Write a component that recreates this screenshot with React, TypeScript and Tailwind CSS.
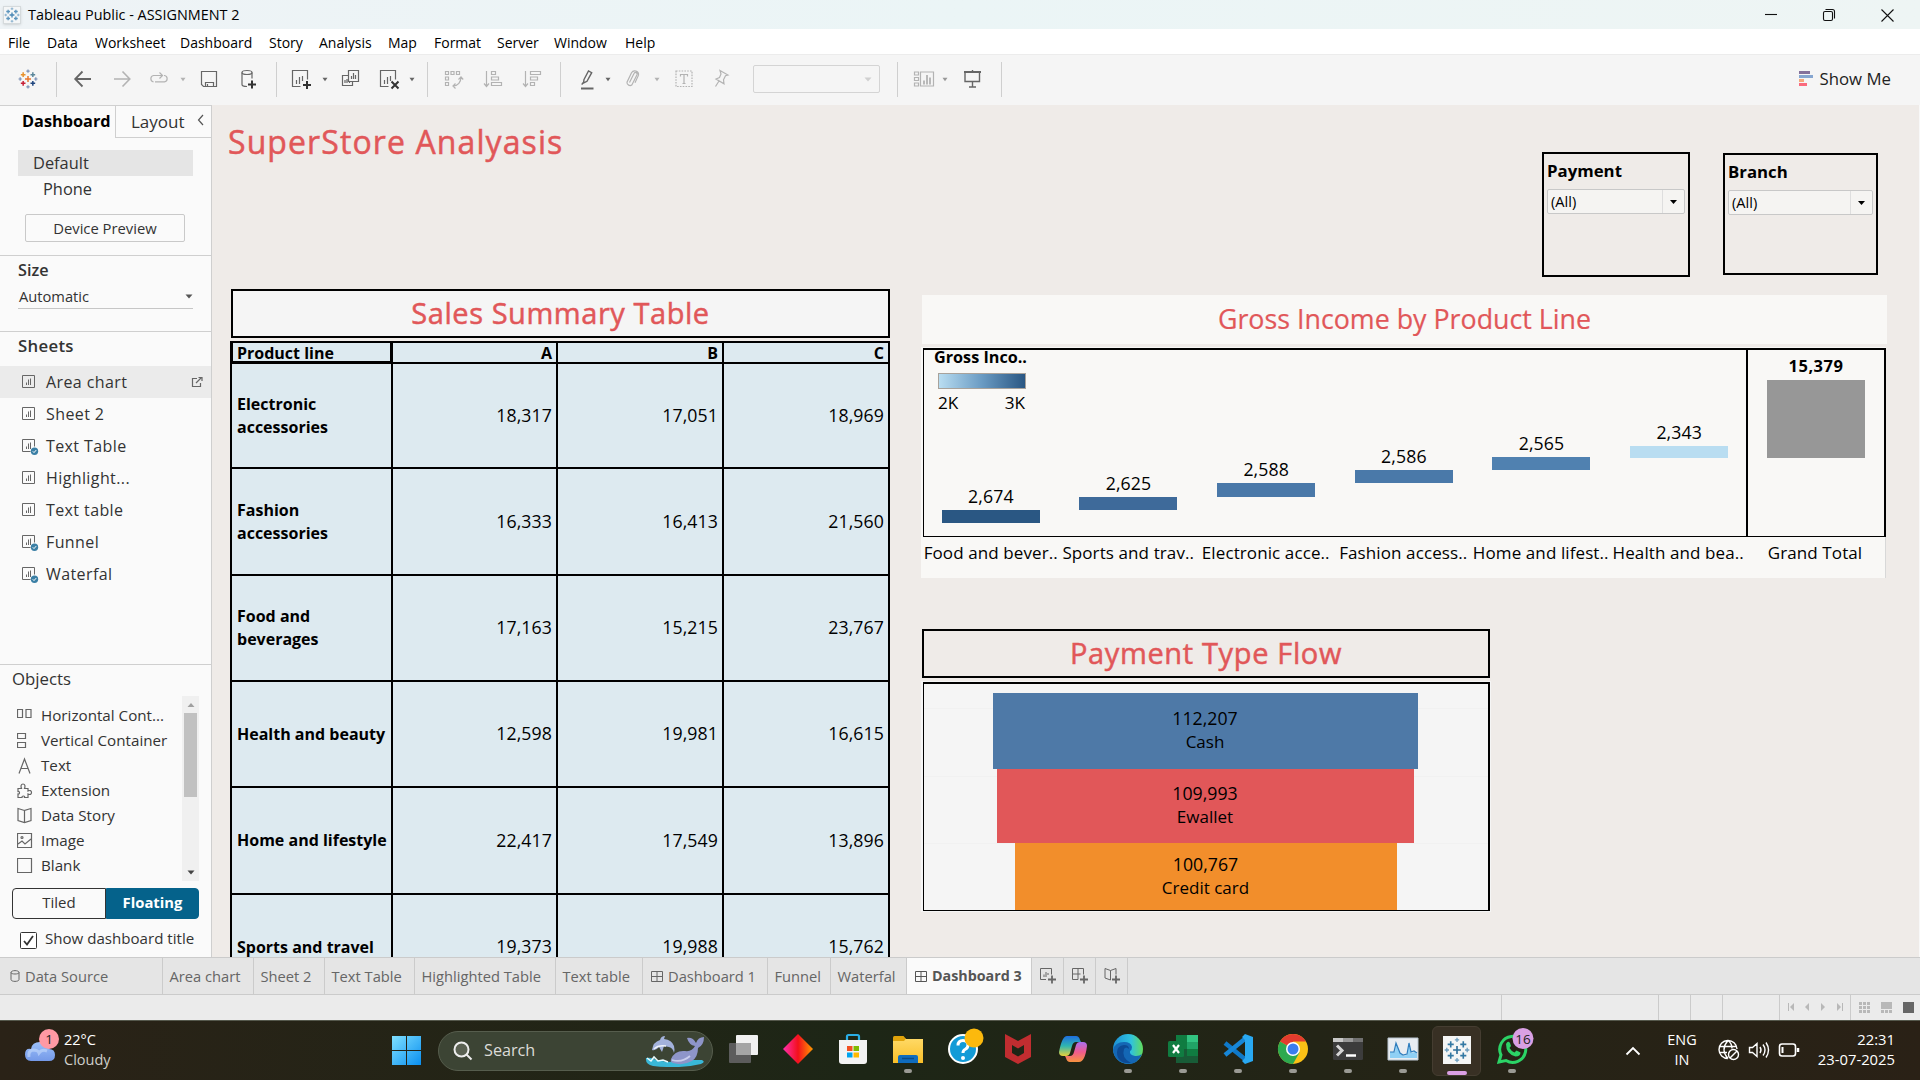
import React from "react";

type Kids = { children?: React.ReactNode };

const plus = (x: number, y: number, r: number) => `M${x - r} ${y}h${2 * r}M${x} ${y - r}v${2 * r}`;

function TableauMark({ size, colors, w = 1.4 }: { size: number; colors: string[]; w?: number }) {
  const [c, a, b, d, e, f] = colors;
  return (
    <svg width={size} height={size} viewBox="0 0 24 24" fill="none" strokeWidth={w} className="shrink-0">
      <path d={plus(12, 12, 3.6)} stroke={c} />
      <path d={plus(6.2, 6.8, 2.8)} stroke={a} />
      <path d={plus(17.8, 6.8, 2.8)} stroke={b} />
      <path d={plus(6.2, 17.2, 2.8)} stroke={d} />
      <path d={plus(17.8, 17.2, 2.8)} stroke={e} />
      <path d={plus(12, 2.6, 2) + plus(12, 21.4, 2) + plus(2.6, 12, 2) + plus(21.4, 12, 2)} stroke={f} strokeWidth={w * 0.8} />
    </svg>
  );
}

function TIcon({ children, className = "" }: Kids & { className?: string }) {
  return (
    <svg width="24" height="24" viewBox="0 0 24 24" fill="none" stroke="currentColor" strokeWidth="1.2" className={"shrink-0 " + className}>
      {children}
    </svg>
  );
}

function Caret({ className = "" }: { className?: string }) {
  return (
    <svg width="8" height="5" viewBox="0 0 8 5" className={"shrink-0 " + className}>
      <path d="M1.5 .8h5L4 4.3z" fill="currentColor" />
    </svg>
  );
}

function Div({ className = "" }: { className?: string }) {
  return <div className={"h-[35px] w-px shrink-0 bg-[#cfcfcf] " + className} />;
}

function TitleBar() {
  return (
    <div className="flex h-[29px] items-center bg-linear-to-r from-[#eef3f6] via-[#ebf5f6] to-[#eef5f4]">
      <div className="ml-[3px] flex h-[18px] w-[18px] items-center justify-center border border-[#d5dadc] bg-[#f4f6f7] shadow-sm">
        <TableauMark size={16} w={2} colors={["#4a86b4", "#5b94bd", "#5b94bd", "#5b94bd", "#5b94bd", "#8ab2cf"]} />
      </div>
      <span className="ml-[7px] flex-1 text-[14.400px] text-black">Tableau Public - ASSIGNMENT 2</span>
      <svg width="140" height="16" viewBox="0 0 140 16" fill="none" stroke="#111" strokeWidth="1.1" className="mr-[17px]">
        <path d="M2 7.5h12" />
        <rect x="60.5" y="4.5" width="9" height="9" rx="1.5" />
        <path d="M62.5 2.5h7a2 2 0 0 1 2 2v7" />
        <path d="M118.5 2.5l12 12M130.500 2.500l-12 12" />
      </svg>
    </div>
  );
}

const menus: [string, string][] = [
  ["File", "w-[39px]"],
  ["Data", "w-[48px]"],
  ["Worksheet", "w-[85px]"],
  ["Dashboard", "w-[89px]"],
  ["Story", "w-[50px]"],
  ["Analysis", "w-[69px]"],
  ["Map", "w-[46px]"],
  ["Format", "w-[63px]"],
  ["Server", "w-[57px]"],
  ["Window", "w-[71px]"],
  ["Help", "w-[60px]"],
];

function MenuBar() {
  return (
    <div className="flex h-[25px] items-center bg-white pt-[2px] pl-[8px] text-[14px] text-black">
      {menus.map(([m, w]) => (
        <span key={m} className={"shrink-0 " + w}>{m}</span>
      ))}
    </div>
  );
}

function Toolbar() {
  return (
    <div className="flex h-[51px] items-center border-t border-[#ececec] bg-[#f5f5f5] pb-[2px] pl-[16px] text-[#666]">
      <div className="flex w-[24px] justify-center">
        <TableauMark size={20} colors={["#e8762d", "#e8912d", "#5b879b", "#c72037", "#1f457e", "#7a8fb5"]} w={1.8} />
      </div>
      <Div className="ml-[16px]" />
      <TIcon className="ml-[14px]"><path d="M20 12H4.500M11.500 4.500L4.200 12l7.300 7.500" strokeWidth="1.8" /></TIcon>
      <TIcon className="ml-[15px] text-[#b3b3b3]"><path d="M4 12h15.500M12.500 4.500l7.300 7.500-7.300 7.500" strokeWidth="1.6" /></TIcon>
      <TIcon className="ml-[13px] text-[#b3b3b3]"><path d="M6.500 14.800a3.200 3.200 0 0 1 0-6.300H15.500M12.500 5.500l3 3-3 3M17 8.500h.500a3.200 3.200 0 0 1 0 6.300H8" /></TIcon>
      <Caret className="ml-[8px] text-[#b3b3b3]" />
      <TIcon className="ml-[10px]"><path d="M4.500 4.500h15v15h-13l-2-2zM8.500 19.500v-4h8v4M10.500 19.500v-2.500" /></TIcon>
      <TIcon className="ml-[15px]">
        <ellipse cx="11" cy="5.500" rx="5" ry="2" />
        <path d="M6 5.500v12c0 1.200 2 2 5 2M16 5.500v6" />
        <path d="M12 17.500h8M16 13.500v8" strokeWidth="2" stroke="#333" />
      </TIcon>
      <Div className="ml-[16px]" />
      <TIcon className="ml-[12px]">
        <path d="M11.500 19.500h-8v-16h15v9M7.500 17v-4M10.500 17v-7M13.500 14v-5" />
        <path d="M14 18h8M18 14v8" strokeWidth="2" stroke="#333" />
      </TIcon>
      <Caret className="ml-[8px]" />
      <TIcon className="ml-[10px]">
        <path d="M9.500 3.500h10v11h-10zM12.500 12V9M14.500 12V6M16.500 12V8M9 8.500H3.500v10h10v-4M6 16v-3M8 16v-4M10.500 16v-1" />
      </TIcon>
      <TIcon className="ml-[14px]">
        <path d="M11.500 19.500h-8v-16h15v9M7.500 17v-4M10.500 17v-7M13.500 14v-5" />
        <path d="M14.500 14.500l7 7M21.500 14.500l-7 7" strokeWidth="2" stroke="#333" />
      </TIcon>
      <Caret className="ml-[7px]" />
      <Div className="ml-[11px]" />
      <TIcon className="ml-[13px] text-[#b3b3b3]">
        <path d="M4.500 4.500h3v3h-3zM10 4.500h3v3h-3zM15.500 4.500h3v3h-3zM4.500 10h3v3h-3zM4.500 15.500h3v3h-3zM20 10c0 5-3 9-8 9M17.500 12.500L20 10l2.200 2.500M14.500 16.500L12 19l2.500 2.500" />
      </TIcon>
      <TIcon className="ml-[16px] text-[#b3b3b3]">
        <path d="M5.500 4v15M3 16.500L5.500 19.500l2.500-3M10.500 4.500h4v3h-4zM10.500 10h7v3h-7zM10.500 15.500h10v3h-10z" />
      </TIcon>
      <TIcon className="ml-[15px] text-[#b3b3b3]">
        <path d="M5.500 4v15M3 16.500L5.500 19.500l2.500-3M10.500 4.500h10v3h-10zM10.500 10h7v3h-7zM10.500 15.500h4v3h-4z" />
      </TIcon>
      <Div className="ml-[16px]" />
      <TIcon className="ml-[14px]">
        <path d="M9 12.500L13.500 4l3.200 1.700-4.700 8.600-3.500 1.700zM8 15.500l-1.200 2.200" strokeWidth="1.400" />
        <path d="M6 21.500h12.500" strokeWidth="2" />
      </TIcon>
      <Caret className="ml-[5px]" />
      <TIcon className="ml-[9px] text-[#b3b3b3]">
        <path d="M8.500 15.500l4.500-9a1.500 1.500 0 0 1 3 1.200l-5 10a3 3 0 0 1-5-2.500l4.500-9.500a3.800 3.800 0 0 1 7 2.500l-3.500 7.500" />
      </TIcon>
      <Caret className="ml-[8px] text-[#b3b3b3]" />
      <TIcon className="ml-[11px] text-[#b3b3b3]">
        <rect x="4" y="4" width="16" height="15.500" strokeDasharray="1.600 1.200" />
        <path d="M8.500 9.500V7.500h7v2M12 7.500v9M10.500 16.500h3" />
      </TIcon>
      <TIcon className="ml-[13px] text-[#b3b3b3]">
        <path d="M11 3.500l8 4.500-2.500.800-2 4 .5 4-8-4.800 3.500-1.500 1.500-3.500zM10 14l-3.500 5.500" />
      </TIcon>
      <div className="ml-[20px] flex h-[28px] w-[127px] items-center justify-end rounded-xs border border-[#d4d4d4] pr-[7px] text-[#d0d0d0]">
        <svg width="8" height="5"><path d="M.500.500h7L4 4.500z" fill="currentColor" /></svg>
      </div>
      <Div className="ml-[17px]" />
      <TIcon className="ml-[14px] text-[#b3b3b3]">
        <path d="M2.500 5h4v3h-4zM2.500 10.500h4v3h-4zM2.500 16h4v3h-4zM8.500 5h13v14h-13z" />
        <path d="M12 17.500v-4M15 17.500V8M18 17.500v-7" strokeWidth="1.800" />
      </TIcon>
      <Caret className="ml-[5px] text-[#999]" />
      <TIcon className="ml-[11px]">
        <path d="M4 5h17" strokeWidth="2" />
        <path d="M5 5v9.500h14.500V5M12.500 14.500v5M9 20h7M12.500 3v2" strokeWidth="1.400" />
      </TIcon>
      <Div className="ml-[17px]" />
      <div className="ml-auto flex items-center pr-[29px]">
        <svg width="15" height="16">
          <path d="M0 0h11v3H0z" fill="#84719b" /><path d="M0 4h14v3H0z" fill="#86a6d0" />
          <path d="M0 8h5v3H0z" fill="#f4a97c" /><path d="M0 12h8v3H0z" fill="#fa6a7d" />
        </svg>
        <span className="ml-[6px] text-[16.800px] text-[#222]">Show Me</span>
      </div>
    </div>
  );
}

function SheetIcon({ used }: { used?: boolean }) {
  return (
    <svg width="18" height="18" viewBox="0 0 18 18" fill="none" stroke="#666" strokeWidth="1">
      <path d={used ? "M8.500 14.500h-8v-12h12v7" : "M.5 2.500h12v12H.5z"} />
      <path d="M4.500 12V9.500M6.500 12V6.500M8.500 12V5.500" />
      {used && <circle cx="12.500" cy="14.300" r="3.700" fill="#3a7fa5" stroke="none" />}
      {used && <path d="M10.800 14.300l1.200 1.300 2.200-2.500" stroke="#fff" />}
    </svg>
  );
}

const sheets: [string, boolean][] = [
  ["Area chart", false], ["Sheet 2", false], ["Text Table", true], ["Highlight...", false],
  ["Text table", false], ["Funnel", true], ["Waterfal", true],
];

const objects: [string, React.ReactNode][] = [
  ["Horizontal Cont...", <path key="h" d="M.5 2.500h5v8h-5zM9 2.500h5v8H9z" />],
  ["Vertical Container", <path key="v" d="M.5 1.500h8v5h-8zM.5 10.500h8v5h-8z" />],
  ["Text", <path key="t" d="M2 16.500L7.500 2 13 16.500M4 11.500h7" />],
  ["Extension", <path key="e" d="M1 6.500h3.500C3.500 4 4 2 6 2s2.500 2 1.500 4.500H11V9c2-1 3.500-.5 3.500 1.500S13 13 11 12v3.500H7.500c1-2-3-2-2.500 0H1V12c2 .5 2-3 0-2.500z" />],
  ["Data Story", <path key="d" d="M7.500 3.500L1 1.500v12l6.500 2 6.500-2v-12L7.500 3.500v12" />],
  ["Image", <g key="i"><path d="M.5 1.500h14v14H.5zM1 12l4-3 3 3 6-5" /><circle cx="5" cy="5.500" r="1" /></g>],
  ["Blank", <path key="b" d="M.5 1.500h14v14H.5z" />],
];

function Sidebar() {
  return (
    <aside className="flex h-full w-[212px] shrink-0 flex-col border-r border-[#cfcfcf] bg-[#fafafa] text-[#333]">
      <div className="flex h-[33px] border-t border-[#d0d0d0]">
        <div className="w-[115px] pt-[3px] pl-[22px] text-[16.300px] leading-[24px] font-bold text-black">Dashboard</div>
        <div className="flex flex-1 items-center border-b border-l border-[#cfcfcf] pl-[15px] text-[17px]">
          Layout
          <svg width="8" height="12" className="mb-[4px] ml-[12px]" fill="none" stroke="#555" strokeWidth="1.200"><path d="M6 1L1.500 6 6 11" /></svg>
        </div>
      </div>
      <div className="h-[117px] pt-[12px] text-[16.400px] leading-[26px]">
        <div className="ml-[18px] w-[175px] bg-[#e5e5e5] pl-[15px]">Default</div>
        <div className="pl-[43px]">Phone</div>
        <div className="mt-[12px] ml-[25px] flex h-[28px] w-[160px] items-center justify-center rounded-xs border border-[#c9c9c9] text-[14.800px]">Device Preview</div>
      </div>
      <div className="h-[76px] border-t border-[#cfcfcf]">
        <div className="mt-[2px] pl-[18px] text-[16.200px] leading-[24px] font-semibold">Size</div>
        <div className="ml-[18px] flex h-[27px] w-[175px] items-center justify-between border-b border-[#c6c6c6] pt-[2px] text-[14.700px]">
          <span className="pl-px">Automatic</span>
          <svg width="8" height="5"><path d="M.5.500h7L4 4.500z" fill="#555" /></svg>
        </div>
      </div>
      <div className="h-[333px] border-t border-[#cfcfcf]">
        <div className="h-[34px] pt-[2px] pl-[18px] text-[16.800px] leading-[24px] font-semibold tracking-[0.3px]">Sheets</div>
        {sheets.map(([name, used], i) => (
          <div key={name} className={"flex h-[32px] items-center pl-[22px] text-[16px] tracking-[0.4px] " + (i === 0 ? "bg-[#ebebeb]" : "")}>
            <SheetIcon used={used} />
            <span className="ml-[6px] flex-1">{name}</span>
            {i === 0 && (
              <svg width="12" height="12" className="mr-[8px]" fill="none" stroke="#666" strokeWidth="1.200">
                <path d="M6 2.500H1.500v8h8V7M5 7l5-5M7.500 1.500h3.500V5" />
              </svg>
            )}
          </div>
        ))}
      </div>
      <div className="flex-1 border-t border-[#cfcfcf]">
        <div className="h-[31px] pt-px pl-[12px] text-[16.800px] leading-[25px]">Objects</div>
        <div className="flex h-[185px]">
          <div className="w-[182px] overflow-hidden pt-[7px]">
            {objects.map(([name, d]) => (
              <div key={name} className="flex h-[25px] items-center pl-[17px] text-[15.200px]">
                <svg width="16" height="17" fill="none" stroke="#666" strokeWidth="1.200" className="shrink-0">{d}</svg>
                <span className="ml-[8px] whitespace-nowrap">{name}</span>
              </div>
            ))}
          </div>
          <div className="flex w-[17px] flex-col items-center justify-between bg-[#f0f0f0] pb-[6px]">
            <div className="flex flex-col items-center">
              <svg width="8" height="17"><path d="M.5 11h7L4 7z" fill="#a0a0a0" /></svg>
              <div className="h-[84px] w-[13px] bg-[#c1c1c1]" />
            </div>
            <svg width="8" height="5"><path d="M.5.500h7L4 4.500z" fill="#444" /></svg>
          </div>
        </div>
        <div className="mt-[7px] ml-[12px] flex h-[31px] w-[187px] text-[15px] leading-[27px]">
          <div className="w-[94px] rounded-l-sm border border-[#333] bg-[#fafafa] text-center text-[#333]">Tiled</div>
          <div className="flex-1 rounded-r-sm border border-[#05628b] bg-[#05628b] text-center text-[14.800px] font-bold text-white">Floating</div>
        </div>
        <div className="mt-[11px] flex items-center pl-[20px] text-[15.100px] leading-[17px]">
          <svg width="17" height="17" fill="none"><rect x=".5" y=".5" width="16" height="16" rx="1" fill="#fff" stroke="#333" /><path d="M4 9l3 3.500L13 4" stroke="#333" strokeWidth="1.800" /></svg>
          <span className="mb-[3px] ml-[8px]">Show dashboard title</span>
        </div>
      </div>
    </aside>
  );
}

const rows: [string, string, string, string, string][] = [
  ["Electronic accessories", "18,317", "17,051", "18,969", "h-[105px]"],
  ["Fashion accessories", "16,333", "16,413", "21,560", "h-[107px]"],
  ["Food and beverages", "17,163", "15,215", "23,767", "h-[106px]"],
  ["Health and beauty", "12,598", "19,981", "16,615", "h-[106px]"],
  ["Home and lifestyle", "22,417", "17,549", "13,896", "h-[107px]"],
  ["Sports and travel", "19,373", "19,988", "15,762", "h-[106px]"],
];

const cell = "border-r-2 border-b-2 border-black flex items-center";

function SalesTable() {
  return (
    <section className="flex flex-col">
      <h2 className="ml-px h-[49px] w-[659px] border-2 border-black bg-[#f5f5f5] text-center text-[29px] leading-[44px] tracking-[0.55px] text-[#e15759] [-webkit-text-stroke:0.5px_#e15759]">Sales Summary Table</h2>
      <div className="mt-[3px] w-[660px] border-t-2 border-l-2 border-black bg-[#ddeaf0] text-[17.700px] leading-[17px] text-black">
        <div className="grid h-[21px] grid-cols-[161px_165px_166px_166px] text-[16px] font-bold">
          <div className={cell + " pt-px pl-[5px] shadow-[inset_1px_0_0_#000,inset_-1px_-1px_0_#000]"}>Product line</div>
          {["A", "B", "C"].map((b) => <div key={b} className={cell + " justify-end pt-px pr-[4px]"}>{b}</div>)}
        </div>
        {rows.map(([name, a, b, c, h]) => (
          <div key={name} className={"grid grid-cols-[161px_165px_166px_166px] " + h}>
            <div className={cell + " pl-[5px] text-[16px] leading-[23px] font-bold"}>
              <span className={name.includes("accessories") || name.includes("beverages") ? "w-[110px]" : "whitespace-nowrap"}>{name}</span>
            </div>
            {[a, b, c].map((v) => <div key={v} className={cell + " justify-end pr-[4px] pb-px tracking-[0.1px]"}>{v}</div>)}
          </div>
        ))}
      </div>
    </section>
  );
}

function Filter({ name, box, first }: { name: string; box: string; first: string }) {
  return (
    <div className={"border-2 border-black px-[3px] pt-[5px] " + box}>
      <div className="text-[16.800px] leading-[24px] font-bold text-black">{name}</div>
      <div className="mt-[6px] flex h-[25px] rounded-xs border border-[#c8c8c8] bg-[#f5f4f2] text-[14.600px] leading-[23px] text-black">
        <span className={"border-r border-[#dedede] pl-[3px] " + first}>(All)</span>
        <div className="flex flex-1 items-center justify-center">
          <svg width="7" height="4"><path d="M0 0h7L3.500 4z" fill="#000" /></svg>
        </div>
      </div>
    </div>
  );
}

const PLOT_TOP = 350;
const bars: [string, string, number, number, string][] = [
  ["Food and bever..", "2,674", 510, 523, "#2a5783"],
  ["Sports and trav..", "2,625", 497, 510, "#3e6a9a"],
  ["Electronic acce..", "2,588", 483, 497, "#4a78a8"],
  ["Fashion access..", "2,586", 470, 483, "#4a79a9"],
  ["Home and lifest..", "2,565", 457, 470, "#5081b0"],
  ["Health and bea..", "2,343", 446, 458, "#b9ddf1"],
];

function Bar({ value, top, bottom, color, bold }: { value: string; top: number; bottom: number; color: string; bold?: boolean }) {
  return (
    <div className="flex flex-col items-center" style={{ paddingTop: top - PLOT_TOP - 26 }}>
      <span className={"mb-[2px] leading-[24px] " + (bold ? "text-[16.500px] font-bold tracking-[0.5px]" : "text-[17.700px] tracking-[0.1px]")}>{value}</span>
      <div className="w-[98px]" style={{ height: bottom - top, background: color }} />
    </div>
  );
}

function GrossIncome() {
  return (
    <section>
      <h2 className="ml-px h-[49px] w-[965px] bg-[#f9f8f6] text-center text-[26.800px] leading-[47px] text-[#e15759] [-webkit-text-stroke:0.2px_#e15759]">Gross Income by Product Line</h2>
      <div className="mt-[3px] h-[231px] w-[965px] bg-[#f9f8f6] pt-px pl-[2px] text-black">
        <div className="relative flex h-[189px] border-t-2 border-r-2 border-b border-l border-black">
          <div className="-ml-[2px] grid w-[826px] shrink-0 grid-cols-6">
            {bars.map(([n, v, t, b, c]) => <Bar key={n} value={v} top={t} bottom={b} color={c} />)}
          </div>
          <div className="-ml-[2px] flex-1 border-l-2 border-black">
            <Bar value="15,379" top={380} bottom={458} color="#979797" bold />
          </div>
          <div className="absolute top-[-5px] left-[10px] w-[96px]">
            <div className="text-[16.200px] leading-[24px] font-bold whitespace-nowrap">Gross Inco..</div>
            <div className="mt-[4px] ml-[4px] h-[16px] w-[88px] border border-[#a8a29b] bg-linear-to-r from-[#b9ddf1] via-[#6a9bc3] to-[#2a5783]" />
            <div className="mt-[2px] ml-[4px] flex w-[87px] justify-between text-[17.200px] leading-[24px]"><span>2K</span><span>3K</span></div>
          </div>
        </div>
        <div className="flex h-[41px] border-r border-[#d8d8d8] pt-[4px] text-[17px] leading-[24px] tracking-[0.1px]">
          <div className="-ml-[1px] grid w-[825px] shrink-0 grid-cols-6">
            {bars.map(([n]) => <span key={n} className="-mx-[4px] text-center whitespace-nowrap">{n}</span>)}
          </div>
          <span className="flex-1 pr-[2px] text-center">Grand Total</span>
        </div>
      </div>
    </section>
  );
}

const flow: [string, string, string][] = [
  ["112,207", "Cash", "h-[76px] w-[425px] bg-[#4e79a7] pt-[14px]"],
  ["109,993", "Ewallet", "h-[74px] w-[417px] bg-[#e15759] pt-[13px]"],
  ["100,767", "Credit card", "ml-px h-[67px] w-[382px] bg-[#f28e2b] pt-[10px]"],
];

function PaymentFlow() {
  return (
    <section className="mt-[51px]">
      <h2 className="ml-px h-[49px] w-[568px] border-2 border-black text-center text-[29px] leading-[44px] tracking-[0.65px] text-[#e15759] [-webkit-text-stroke:0.5px_#e15759]">Payment Type Flow</h2>
      <div className="mt-[3px] h-[231px] w-[570px] bg-[#f5f5f5] pt-px pr-px pl-[2px]">
        <div className="flex h-[229px] flex-col items-center border-t-2 border-r-2 border-b border-l border-black bg-[linear-gradient(#f1f1f1,#f1f1f1),linear-gradient(#f1f1f1,#f1f1f1),linear-gradient(#f1f1f1,#f1f1f1)] bg-[length:100%_1px] bg-[position:0_24px,0_92px,0_159px] bg-no-repeat pt-[9px] pr-[2px] text-black">
          {flow.map(([v, n, cls]) => (
            <div key={n} className={"text-center leading-[23px] " + cls}>
              <div className="text-[17.700px]">{v}</div>
              <div className="text-[17px]">{n}</div>
            </div>
          ))}
        </div>
      </div>
    </section>
  );
}

function Canvas() {
  return (
    <main className="flex min-w-0 flex-1 overflow-hidden border-r border-[#f8f8f8] bg-[#efebe8] pl-[18px]">
      <div className="w-[660px] shrink-0">
        <h1 className="-ml-[2px] h-[184px] pt-[13px] text-[32px] leading-[48px] tracking-[1.100px] text-[#e15759] [-webkit-text-stroke:0.5px_#e15759]">SuperStore Analyasis</h1>
        <SalesTable />
      </div>
      <div className="ml-[31px] w-[966px] shrink-0">
        <div className="flex h-[190px] items-start justify-end gap-[33px] pt-[47px] pr-[9px]">
          <Filter name="Payment" box="h-[125px] w-[148px]" first="w-[115px]" />
          <Filter name="Branch" box="mt-px h-[122px] w-[155px]" first="w-[122px]" />
        </div>
        <GrossIncome />
        <PaymentFlow />
      </div>
    </main>
  );
}

function DashIcon() {
  return (
    <svg width="12" height="13" className="mr-[5px]" fill="none" stroke="currentColor"><path d="M.5 1.500h11v10H.5zM6 1.500v10M.5 6.500h11" /></svg>
  );
}

const tabs: [string, string, boolean?][] = [
  ["Area chart", "w-[91px]"], ["Sheet 2", "w-[71px]"], ["Text Table", "w-[90px]"], ["Highlighted Table", "w-[141px]"],
  ["Text table", "w-[87px]"], ["Dashboard 1", "w-[125px]", true], ["Funnel", "w-[63px]"], ["Waterfal", "w-[76px]"],
];

const newTabs = [
  "M7 12.500H1.500v-11h11v6M5 10V7.500M7 10V5M9 8V6",
  "M7 12.500H1.500v-11h11v6M7 1.500v11M1.500 7h8",
  "M7.500 3.500L2 1.500v9.500l5.500 2zM7.500 3.500L13 1.500v6",
];

function TabStrip() {
  return (
    <div className="flex h-[38px] items-stretch border-y border-[#cbcbcb] bg-[#e5e5e5] text-[14.700px] text-[#666]">
      <div className="flex w-[163px] items-center border-r border-[#cbcbcb] pt-px pl-[10px]">
        <svg width="10" height="12" className="mr-[5px] mb-[2px]" fill="none" stroke="currentColor"><path d="M1 2.500v7c0 2.500 8 2.500 8 0v-7c0-2.500-8-2.500-8 0c0 2 8 2 8 0" /></svg>
        Data Source
      </div>
      {tabs.map(([t, w, icon]) => (
        <div key={t} className={"flex items-center border-r border-[#cbcbcb] pt-px whitespace-nowrap " + (icon ? "pl-[8px] " : "pl-[6.500px] ") + w}>
          {icon && <DashIcon />}
          {t}
        </div>
      ))}
      <div className="flex w-[125px] items-center border-r border-[#cbcbcb] bg-[#fafafa] pl-[8px] text-[14.300px] font-bold whitespace-nowrap text-[#555]">
        <DashIcon />
        Dashboard 3
      </div>
      {newTabs.map((d) => (
        <div key={d} className="flex w-[32px] items-center justify-center border-r border-[#cbcbcb]">
          <svg width="18" height="18" fill="none" stroke="#666"><path d={d} /><path d="M9 12.500h8M13 8.500v8" strokeWidth="1.800" /></svg>
        </div>
      ))}
    </div>
  );
}

function StatusBar() {
  return (
    <div className="flex h-[25px] items-stretch justify-end bg-[#ebebeb]">
      {["w-[157px]", "w-[32px]", "w-[32px]", "w-[57px]"].map((w, i) => (
        <div key={i} className={"border-l border-[#cbcbcb] " + w} />
      ))}
      <div className="flex w-[71px] items-center justify-center border-l border-[#cbcbcb] pb-px pl-px">
        <svg width="56" height="8" fill="#b8b8b8">
          <path d="M0 0h1v8H0zM6 0v8L2 4zM21 0v8l-4-4zM33 0v8l4-4zM49 0v8l4-4zM54 0h1v8h-1z" />
        </svg>
      </div>
      <div className="flex w-[70px] items-center border-l border-[#cbcbcb] pb-px pl-[8px]">
        <svg width="56" height="11" fill="#b8b8b8">
          <path d="M0 0h3v3H0zM4 0h3v3H4zM8 0h3v3H8zM0 4h3v3H0zM4 4h3v3H4zM8 4h3v3H8zM0 8h3v3H0zM4 8h3v3H4zM8 8h3v3H8z" />
          <path d="M22 0h11v7H22zM22 8h3v3h-3zM26 8h3v3h-3zM30 8h3v3h-3z" />
          <path d="M44 0h11v11H44z" fill="#666" />
        </svg>
      </div>
    </div>
  );
}

const apps: { id: string; dot?: boolean; art: React.ReactNode }[] = [
  { id: "taskview", art: <><rect x="1" y="9" width="22" height="20" rx="1" fill="#5c5c5c" /><rect x="8" y="1" width="22" height="20" rx="1" fill="#f1f1f1" /><rect x="8" y="9" width="15" height="12" fill="#a5a5a5" /></> },
  { id: "diamond", art: <path d="M15 0l15 15-15 15L0 15z" fill="url(#dia)" /> },
  { id: "store", art: <><path d="M9 7V2.500Q9 1 10.500 1h9Q21 1 21 2.500V7" fill="none" stroke="#2aaee6" strokeWidth="2.200" /><path d="M1 6h28v21q0 3-3 3H4q-3 0-3-3z" fill="#f3f3f3" /><path d="M9 12h5.500v5H9z" fill="#f25022" /><path d="M15.500 12H21v5h-5.500z" fill="#7fba00" /><path d="M9 18.500h5.500v5H9z" fill="#00a4ef" /><path d="M15.500 18.500H21v5h-5.500z" fill="#ffb900" /></> },
  { id: "explorer", dot: true, art: <><path d="M0 3.500Q0 2 1.500 2h9l3 3.500H0z" fill="#e0a30b" /><path d="M0 5h30v24H0z" fill="url(#fold)" /><path d="M0 4.500h13l-2 2.500H0z" fill="#e0a30b" /><path d="M5 29v-6q0-2 2-2h16q2 0 2 2v6z" fill="#0f6cbd" /><path d="M9 24.500h12" stroke="#0a4a86" strokeWidth="1.500" /></> },
  { id: "help", art: <><circle cx="15" cy="15" r="14" fill="#139bd7" stroke="#fff" strokeWidth="2" /><path d="M10 11.500q0-5 5-5t5 4.500q0 3-3 4.500-2 1-2 3.500" fill="none" stroke="#fff" strokeWidth="3" /><circle cx="15" cy="24" r="2" fill="#fff" /><circle cx="26" cy="4" r="9.500" fill="#fcb90d" /></> },
  { id: "shield", art: <path d="M2 0l13 7L28 0v23l-13 7-13-7zM9 11v8l6 3.500 6-3.500v-8l-6 3.500z" fill="#c12d30" fillRule="evenodd" /> },
  { id: "copilot", art: <><path d="M9 2h9q3 0 4 4l1 2h-5q-3 0-4 4l-2 7q-1 3-4 3H5q-4 0-4-4Q4 2 9 2z" fill="url(#cpa)" /><path d="M21 28h-9q-3 0-4-4l-1-2h5q3 0 4-4l2-7q1-3 4-3h3q4 0 4 4-2 16-8 16z" fill="url(#cpb)" /></> },
  { id: "edge", dot: true, art: <><circle cx="15" cy="15" r="15" fill="url(#edg)" /><path d="M0 16Q2 8 11 8q7 0 8 5 0 3-2 4-1 4 5 5 4 .5 7-2-4 10-14 10Q2 29 0 16z" fill="#1467b5" /><path d="M11 15q-3 9 7 14-14 1-14-11 0-6 7-7 5 0 5 4-3-3-5 0z" fill="#0d4a94" /></> },
  { id: "excel", dot: true, art: <><path d="M8 1h22v28H8z" fill="#21a366" /><path d="M8 1h11v14H8z" fill="#107c41" /><path d="M19 1h11v7H19z" fill="#33c481" /><path d="M8 15h22v14H8z" fill="#185c37" /><path d="M19 15h11v7H19z" fill="#107c41" /><rect x="0" y="7" width="16" height="16" rx="1.500" fill="#107c41" /><path d="M5 11l6 8M11 11l-6 8" stroke="#fff" strokeWidth="2.200" /></> },
  { id: "code", dot: true, art: <><path d="M2 9l21 17" stroke="#0f79c9" strokeWidth="4.500" /><path d="M2 21L23 4" stroke="#1787d8" strokeWidth="4.500" /><path d="M22 0l8 3v24l-8 3-3-3 3-3V6l-3-3z" fill="#29a9f2" /></> },
  { id: "chrome", dot: true, art: <><circle cx="15" cy="15" r="15" fill="#fbc116" /><path d="M15 15L2 7.500A15 15 0 0 1 28 7.500H15z" fill="#e33b2e" /><path d="M2 7.500A15 15 0 0 0 15 30l6.500-11.500L15 15z" fill="#2da94f" /><circle cx="15" cy="15" r="7" fill="#fff" /><circle cx="15" cy="15" r="5.500" fill="#3b7ded" /></> },
  { id: "terminal", dot: true, art: <><rect x="0" y="4" width="30" height="22" rx="1.500" fill="#3c3c3c" /><path d="M0 4h10v4H0z" fill="#c8c8c8" /><path d="M10 4h10v4H10z" fill="#999" /><path d="M20 4h10v4H20z" fill="#707070" /><path d="M4 11.500l5 5-5 5" fill="none" stroke="#d5d5d5" strokeWidth="3" /><path d="M13 21.500h10" stroke="#fff" strokeWidth="2.500" /></> },
  { id: "monitor", dot: true, art: <><path d="M0 4h30v22H0z" fill="#e9edf2" stroke="#b9c5d0" /><path d="M2 24v-6l5 0 1-9 4 10 3 3 4-1 2-12 2 10 4-1 2 2v4z" fill="#8fd0f5" /><path d="M2 18h4l2-9 4 10 3 2 4-1 2-11 2 9 3-1 3 2" fill="none" stroke="#2f7dbd" strokeWidth="1.200" /></> },
];

function Taskbar() {
  return (
    <footer className="flex h-[60px] items-center border-t border-[#55584c] bg-linear-to-r from-[#2a2217] via-[#1d2616] via-45% to-[#2a2116] text-[14.500px] text-white">
      <svg width="0" height="0" className="absolute">
        <defs>
          <linearGradient id="dia"><stop offset="0" stopColor="#ff2fb0" /><stop offset=".5" stopColor="#f3101c" /><stop offset="1" stopColor="#ff9a00" /></linearGradient>
          <linearGradient id="fold" x2="0" y2="1"><stop offset="0" stopColor="#ffd965" /><stop offset="1" stopColor="#f9bf28" /></linearGradient>
          <linearGradient id="cpa" x2="0" y2="1"><stop offset="0" stopColor="#1e6fe0" /><stop offset=".5" stopColor="#2fb6b0" /><stop offset="1" stopColor="#e8d23a" /></linearGradient>
          <linearGradient id="cpb" x2="0" y2="1"><stop offset="0" stopColor="#a86ff0" /><stop offset=".5" stopColor="#ef5a8e" /><stop offset="1" stopColor="#f7933f" /></linearGradient>
          <linearGradient id="edg"><stop offset="0" stopColor="#1c8fd6" /><stop offset=".6" stopColor="#2fc2df" /><stop offset="1" stopColor="#62dc5c" /></linearGradient>
          <linearGradient id="win" x2="1" y2="1"><stop offset="0" stopColor="#7fe0ff" /><stop offset="1" stopColor="#0a8ff0" /></linearGradient>
          <linearGradient id="cld" x2="0" y2="1"><stop offset="0" stopColor="#9cc0fa" /><stop offset="1" stopColor="#7499e8" /></linearGradient>
        </defs>
      </svg>
      <svg width="36" height="34" className="mt-[-9px] ml-[24px] shrink-0">
        <path d="M7 32q-6 0-6-6.500T7 20q1-7 9-7t9 7q6 0 6 6t-6 6z" fill="url(#cld)" />
        <path d="M5 28q-1-6 4-7 5 0 6 3 3-4 8-2" fill="none" stroke="#c5dafc" strokeWidth="3" opacity=".6" />
        <circle cx="25" cy="10" r="10" fill="#ff99a4" />
        <text x="25" y="15" textAnchor="middle" fontSize="13.500" fill="#222">1</text>
      </svg>
      <div className="-mt-[2px] ml-[4px] w-[328px] leading-[20px]">
        <div>22°C</div>
        <div className="text-[14.500px] text-[#cfcfcb]">Cloudy</div>
      </div>
      <svg width="29" height="29" className="shrink-0"><path d="M0 0h14v14H0zM15 0h14v14H15zM0 15h14v14H0zM15 15h14v14H15z" fill="url(#win)" /></svg>
      <div className="ml-[17px] flex h-[40px] w-[275px] shrink-0 items-center rounded-full border border-[#565d4d] bg-[#3c4434] pr-[7px] pl-[14px]">
        <svg width="20" height="20" fill="none" stroke="#eee" strokeWidth="2"><circle cx="8.500" cy="8.500" r="7" fill="#5a6152" /><path d="M13.500 13.500l5 5" /></svg>
        <span className="ml-[11px] flex-1 text-[16.200px] text-[#dcdcd8]">Search</span>
        <svg width="60" height="32" viewBox="0 0 60 32">
          <path d="M1 23q6-1 10 2l12 2 18-2 16 0q4 2-1 4-20 5-48 2-8-2-7-8z" fill="#39b8d8" />
          <path d="M2 23l4 3 3-4 4 4 5-1 5 2" stroke="#e9fbff" strokeWidth="1.500" fill="none" />
          <path d="M26 24Q30 15 40 16q7 1 10-5-6-1-8-8 6-1 9 5 2-6 8-6 0 8-6 11 0 9-6 13-9 5-19 2-3-1-2-4z" fill="#8e95c9" />
          <path d="M27 25q10 3 18-4" stroke="#c9cdec" strokeWidth="1.800" fill="none" />
          <path d="M7 15Q8 7 15 5q1-4 5-4l-1 3q8 1 10 7 1 4 0 7-1-5-5-6l-5-1-2 6-3-5q-3 4-7 3z" fill="#a3b2dc" />
          <path d="M9 14q4-4 12-3" stroke="#eef3fb" strokeWidth="1.600" fill="none" />
        </svg>
      </div>
      <div className="ml-[2px] flex shrink-0">
        {apps.map((a) => (
          <div key={a.id} className="flex w-[55px] flex-col items-center pt-[6px]">
            <svg width="30" height="30" className="overflow-visible">{a.art}</svg>
            <div className={"mt-[5px] h-[4px] w-[8px] rounded-full " + (a.dot ? "bg-[#9a9a94]" : "")} />
          </div>
        ))}
      </div>
      <div className="ml-[2px] flex h-[50px] w-[49px] shrink-0 flex-col items-center rounded-md border border-[#453d31] bg-[#383024] pt-[9px]">
        <div className="flex h-[28px] w-[28px] items-center justify-center bg-[#f5f5f5]">
          <TableauMark size={26} w={1.500} colors={["#2d6d98", "#3478a3", "#3478a3", "#3478a3", "#3478a3", "#6b9cbd"]} />
        </div>
        <div className="mt-[7px] h-[4px] w-[20px] rounded-full bg-[#db9fe4]" />
      </div>
      <div className="ml-[5px] flex w-[52px] flex-col items-center pt-[6px]">
        <svg width="30" height="30" className="overflow-visible">
          <path d="M2 28l2-7A13 13 0 1 1 9 26.500z" fill="none" stroke="#2bd366" strokeWidth="3" />
          <path d="M9 10q2-4 4-1l1 3-1.500 2q2 3.500 5 4.500l2-2 4 2q0 4-5 4Q9 20 9 10z" fill="#2bd366" />
          <circle cx="26" cy="4.500" r="10.500" fill="#d9a0e4" />
          <text x="26" y="9.500" textAnchor="middle" fontSize="13.500" fill="#222">16</text>
        </svg>
        <div className="mt-[5px] h-[4px] w-[8px] rounded-full bg-[#9a9a94]" />
      </div>
      <div className="ml-auto flex items-center">
        <svg width="16" height="10" className="mr-[26px]" fill="none" stroke="#fff" strokeWidth="1.800"><path d="M1.500 8.500L8 2l6.500 6.500" /></svg>
        <div className="-mt-px w-[30px] text-center text-[14.400px] leading-[20px]"><div>ENG</div><div>IN</div></div>
        <svg width="82" height="22" className="mt-[-2px] ml-[21px]" fill="none" stroke="#fff" strokeWidth="1.400">
          <path d="M10 19.500A9 9 0 1 1 19 10M1.500 7.500h17M1.500 13.500H9M10 1.500q-8 9 0 18M10 1.500q4 3 4 8" />
          <circle cx="15.500" cy="15.500" r="5" /><path d="M12 19l7-7" />
          <path d="M31.500 8.500h3l4.500-4v13l-4.500-4h-3zM42 8q2 3 0 6M45 5.500q4 5.500 0 11M48 3.500q5 7.500 0 15" />
          <rect x="61.500" y="5" width="16" height="12" rx="2.500" strokeWidth="1.600" /><path d="M64.500 8v6" strokeWidth="2" /><path d="M80 9v4" strokeWidth="2.500" />
        </svg>
        <div className="-mt-[3px] mr-[25px] ml-[15px] w-[80px] text-right text-[14.800px] leading-[20px]"><div>22:31</div><div>23-07-2025</div></div>
      </div>
    </footer>
  );
}

export default function App() {
  return (
    <div className="flex h-[1080px] w-[1920px] flex-col overflow-hidden bg-white font-['Open_Sans','Noto_Sans',sans-serif]">
      <TitleBar />
      <MenuBar />
      <Toolbar />
      <div className="flex h-[852px] shrink-0">
        <Sidebar />
        <Canvas />
      </div>
      <TabStrip />
      <StatusBar />
      <Taskbar />
    </div>
  );
}
